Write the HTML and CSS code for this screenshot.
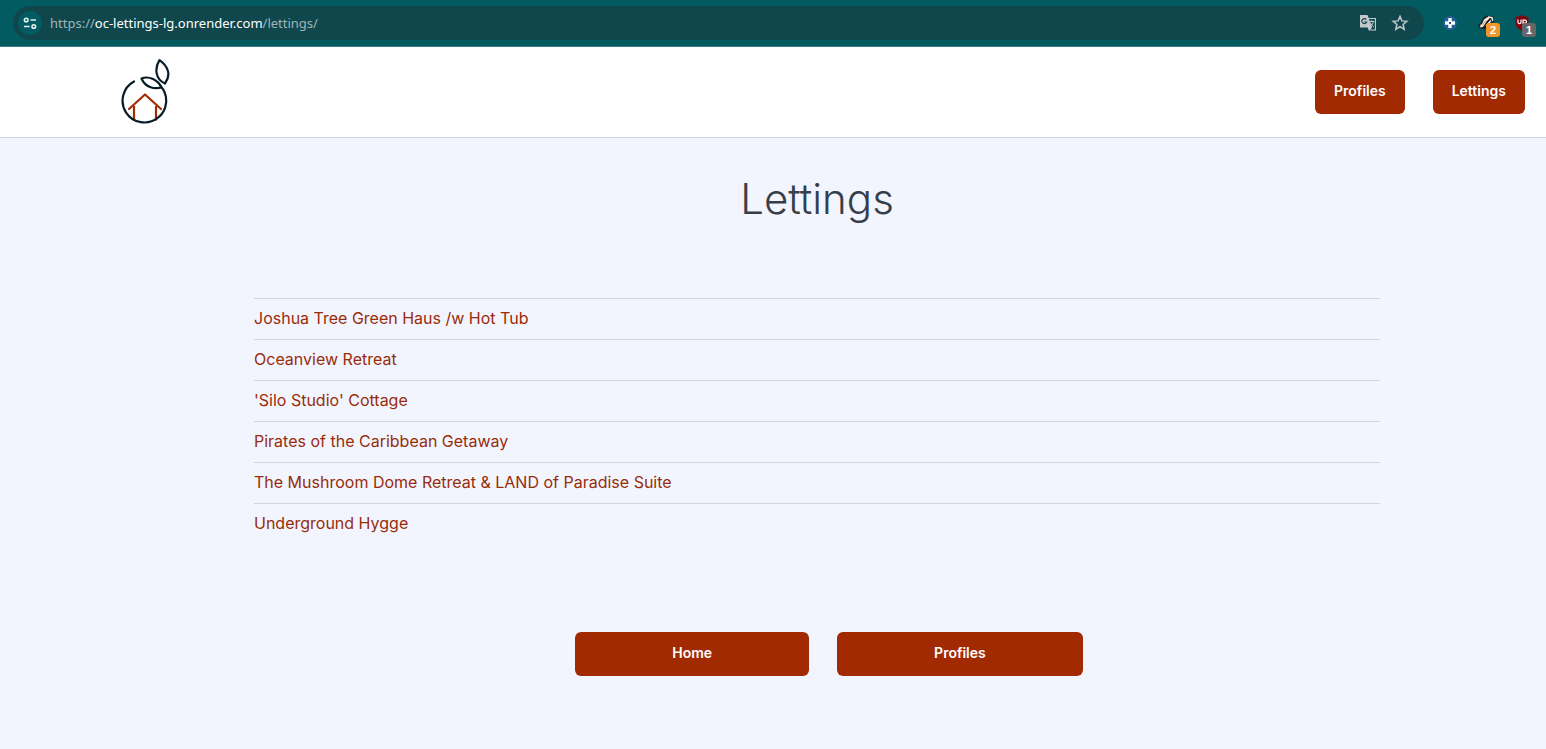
FILE: index.html
```html
<!DOCTYPE html>
<html lang="en">
<head>
<meta charset="utf-8">
<title>Lettings</title>
<link rel="stylesheet" href="styles.css">
</head>
<body>
<div class="browser-bar">
  <div class="address">
    <button class="site-info" aria-label="Site information">
      <svg width="14" height="14" viewBox="0 0 14 14" fill="none" stroke="#e4f0f1" stroke-width="1.6"><circle cx="3.2" cy="4" r="1.8"/><path d="M7.5 4H13M1 10.500H6.500"/><circle cx="10.800" cy="10.500" r="1.800"/></svg>
    </button>
    <div class="url">https://<span class="domain">oc-lettings-lg.onrender.com</span>/lettings/</div>
    <button class="icon-button" aria-label="Translate this page">
      <svg width="18" height="18" viewBox="0 0 18 18"><path d="M1 1h7.500l1.200 3H17v12.500H9.800L8.600 13.500H1z" fill="#c4c8ca"/><path d="M9.900 5h6v10.500h-4.800l2-2z" fill="#10474d"/><path d="M7.300 5.500A2.500 2.500 0 1 0 7.700 8H5.300" fill="none" stroke="#10474d" stroke-width="1.200"/><path d="M10.300 7.500h5M12.700 6.300v1.200M14.400 7.500c-.5 2.400-1.800 4-3.500 5M11.300 8.800c.8 1.800 2 3 3.500 4" fill="none" stroke="#c4c8ca"/></svg>
    </button>
    <button class="icon-button" aria-label="Bookmark this page">
      <svg width="18" height="18" viewBox="0 0 18 18" fill="none" stroke="#c4c8ca" stroke-width="1.500"><path d="M9 2.400l1.900 4.500 4.900.4-3.700 3.200 1.100 4.800L9 12.700l-4.200 2.600 1.100-4.800-3.700-3.200 4.900-.4z"/></svg>
    </button>
  </div>
  <div class="extensions">
    <button class="extension" aria-label="Crosshair extension">
      <svg width="16" height="16" viewBox="0 0 16 16"><circle cx="8" cy="8" r="7" fill="#235f92"/><path d="M6.300 3h3.400v3.300H13v3.400H9.700V13H6.300V9.700H3V6.300h3.300z" fill="#fff"/><path d="M7 7h2v2H7z" fill="#235f92"/></svg>
    </button>
    <button class="extension" aria-label="Privacy extension, 2 items">
      <svg width="16" height="16" viewBox="0 0 16 16"><path d="M0 10l3-2 2-5 4-2.500 6.500 1L16 7l-3 .500L7 14l-6-1z" fill="#161b1b"/><path d="M1 10.500l3-1.500 2-4.500 3.500-2.500 2 1.500-3 3L5 12l-3.500.500 1.500-2z" fill="#f6eee4"/><path d="M10 2l4 .7.800 3M13 5.500L8 11" fill="none" stroke="#f6eee4" stroke-width="1.500"/><path d="M4 10.500l4-5" stroke="#c79867"/></svg>
      <span class="badge badge-orange">2</span>
    </button>
    <button class="extension" aria-label="Content blocker, 1 item">
      <svg width="16" height="16" viewBox="0 0 16 16"><path d="M8 0c2 1.200 4 1.800 6.500 2v6c0 3.500-3 6-6.500 8-3.500-2-6.500-4.500-6.500-8V2C4 1.800 6 1.200 8 0z" fill="#800610"/><path d="M4 4.500v2.700c0 2 3 2 3 0V4.500M9 8.800V5.200h2c2 0 2 3 0 3H9" fill="none" stroke="#fff" stroke-width="1.200"/></svg>
      <span class="badge badge-grey">1</span>
    </button>
  </div>
</div>
<header class="site-header">
  <a class="logo" href="#" aria-label="Orange County Lettings home">
    <svg width="50" height="68" viewBox="0 0 50 68" fill="none" stroke-width="2.200" stroke-linejoin="round" stroke-linecap="round"><g stroke="#a32b05"><path d="M9 50l16-14.500L41 50"/><path d="M14 47v14.500M36 47v14.500" stroke-linecap="butt"/></g><g stroke="#061d29"><path d="M14 22.500A21.800 21.800 0 1 0 40.500 27"/><path d="M21.500 19.500C29 16.500 38 21 41.500 28.500 34 30.500 25 28 21.500 19.500z"/><path d="M39.500 1.200C47 6.500 52 15 45 24.500 35 20 34.500 9 39.500 1.200z"/></g></svg>
  </a>
  <nav class="nav">
    <a class="button" href="#profiles">Profiles</a>
    <a class="button" href="#lettings">Lettings</a>
  </nav>
</header>
<main class="content">
  <h1 class="title">Lettings</h1>
  <ul class="lettings">
    <li><a href="#1">Joshua Tree Green Haus /w Hot Tub</a></li>
    <li><a href="#2">Oceanview Retreat</a></li>
    <li><a href="#3">'Silo Studio' Cottage</a></li>
    <li><a href="#4">Pirates of the Caribbean Getaway</a></li>
    <li><a href="#5">The Mushroom Dome Retreat &amp; LAND of Paradise Suite</a></li>
    <li><a href="#6">Underground Hygge</a></li>
  </ul>
  <div class="actions">
    <a class="button button-wide" href="#home">Home</a>
    <a class="button button-wide" href="#profiles">Profiles</a>
  </div>
</main>
</body>
</html>
```
FILE: styles.css
```css
* { box-sizing: border-box; }
body {
  margin: 0;
  min-height: 100vh;
  background: #f2f5fd;
  font-family: Inter, "Liberation Sans", sans-serif;
  font-size: 16px;
}
button { border: 0; padding: 0; background: none; cursor: pointer; }
a { text-decoration: none; }
svg { display: block; }
.browser-bar {
  display: flex;
  align-items: center;
  gap: 18px;
  height: 47px;
  padding: 0 16px 1px 13px;
  background: #035b62;
  border-bottom: 1px solid #3c7d83;
}
.address {
  flex: 1;
  display: flex;
  align-items: center;
  height: 34px;
  padding: 0 15px 0 5px;
  border-radius: 17px;
  background: #10474d;
}
.site-info {
  display: grid;
  place-items: center;
  width: 24px;
  height: 24px;
  border-radius: 50%;
  background: #035b62;
}
.url {
  flex: 1;
  margin-left: 8px;
  color: #9fb5b8;
  font-family: "Noto Sans", "Open Sans", sans-serif;
  font-size: 13px;
  line-height: 20px;
}
.domain { color: #fff; }
.icon-button { margin-left: 14px; }
.extensions { display: flex; gap: 20px; }
.extension { position: relative; }
.badge {
  position: absolute;
  left: 8px;
  top: 8px;
  width: 14px;
  height: 14px;
  border-radius: 3px;
  color: #fff;
  font: bold 11px/14px "Liberation Sans", sans-serif;
  text-align: center;
}
.badge-orange { background: #f2962a; }
.badge-grey { background: #666; }
.site-header {
  display: flex;
  align-items: center;
  justify-content: space-between;
  padding: 12px 21px 10px 120px;
  background: #fff;
  border-bottom: 1px solid #cdd4e0;
}
.nav { display: flex; gap: 28px; margin-bottom: 2px; }
.button {
  padding: 11px 19px 13px;
  border-radius: 6px;
  background: #a22a02;
  color: #fff;
  font-size: 14px;
  font-weight: 600;
  line-height: 20px;
}
.content { padding: 36px 166px 72px 254px; }
.title {
  margin: 0 0 74px;
  color: #363f49;
  font-size: 42px;
  font-weight: 300;
  line-height: 50px;
  text-align: center;
}
.lettings { margin: 0; padding: 0; list-style: none; }
.lettings li {
  padding: 7px 0 9px;
  border-top: 1px solid #d2d6db;
  line-height: 24px;
}
.lettings a { color: #982c0b; }
.actions {
  display: flex;
  justify-content: center;
  gap: 28px;
  margin-top: 88px;
  padding-left: 24px;
}
.button-wide { padding-right: 97px; padding-left: 97px; }
```
